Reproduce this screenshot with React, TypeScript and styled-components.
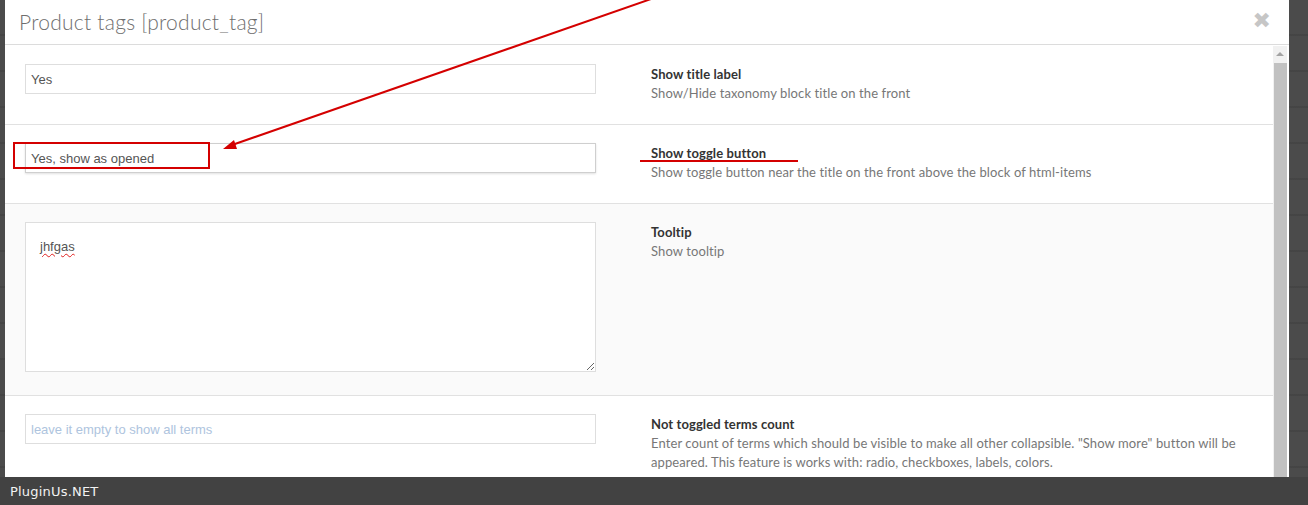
import React from 'react';
import styled, { createGlobalStyle } from 'styled-components';

const GlobalStyle = createGlobalStyle`
  html, body {
    margin: 0;
    padding: 0;
    background: #474747;
    overflow: hidden;
  }
`;

const Page = styled.div`
  position: relative;
  width: 1308px;
  height: 505px;
  display: flex;
  flex-direction: column;
  background: repeating-linear-gradient(
    to bottom,
    #4b4b4b 0px,
    #4b4b4b 34px,
    #3e3e3e 35px,
    #4b4b4b 36px
  );
`;

const Stage = styled.div`
  flex: 1;
  min-height: 0;
  overflow: hidden;
  padding-left: 5px;
`;

const Modal = styled.div`
  width: 1284px;
  height: 100%;
  background: #fff;
  display: flex;
  flex-direction: column;
`;

const Header = styled.div`
  height: 45px;
  flex-shrink: 0;
  display: flex;
  align-items: center;
  justify-content: space-between;
  padding: 0 18px 0 14px;
  border-bottom: 1px solid #dcdcdc;
  box-sizing: border-box;
`;

const Title = styled.h1`
  margin: 0 0 1px;
  font-family: Lato, 'Open Sans', sans-serif;
  font-weight: 300;
  font-size: 21px;
  color: #6e6e6e;
  letter-spacing: 0.25px;
`;

const Close = styled.span`
  font-family: 'DejaVu Sans', sans-serif;
  font-weight: bold;
  font-size: 22px;
  line-height: 1;
  color: #c6c6c6;
  margin-top: -3px;
`;

const Body = styled.div`
  flex: 1;
  min-height: 0;
  display: flex;
  padding-top: 1px;
`;

const Content = styled.div`
  flex: 1;
  min-width: 0;
  overflow: hidden;
`;

const Row = styled.div<{ $shade?: boolean }>`
  display: grid;
  grid-template-columns: 571px 602px;
  column-gap: 55px;
  padding: 18px 20px 21px;
  background: ${(p) => (p.$shade ? '#fafafa' : '#fff')};
  border-bottom: 1px solid #e1e1e1;
`;

const Field = styled.input<{ $focused?: boolean }>`
  width: 100%;
  height: 30px;
  box-sizing: border-box;
  border: 1px solid ${(p) => (p.$focused ? '#cfcfcf' : '#dedede')};
  box-shadow: ${(p) => (p.$focused ? '0 1px 2px rgba(0,0,0,0.12)' : 'none')};
  padding: 0 5px;
  font-family: 'Liberation Sans', Arial, sans-serif;
  font-size: 13px;
  color: #555;
  background: #fff;
  outline: none;

  &::placeholder {
    color: #aec4de;
  }
`;

const Area = styled.textarea`
  width: 100%;
  height: 150px;
  margin-bottom: 2px;
  box-sizing: border-box;
  border: 1px solid #dedede;
  padding: 16px 14px;
  font-family: 'Liberation Sans', Arial, sans-serif;
  font-size: 13px;
  color: #555;
  background: #fff;
  outline: none;
  text-decoration: underline wavy #e02020;
  text-decoration-thickness: 1px;
  text-underline-offset: 2px;
`;

const Info = styled.div`
  padding-top: 1px;
  font-family: Lato, 'Open Sans', sans-serif;
  font-size: 13px;
  line-height: 19px;
  letter-spacing: 0.1px;
`;

const Label = styled.div`
  font-weight: bold;
  color: #333;
`;

const Desc = styled.div`
  color: #777;
`;

const Scrollbar = styled.div`
  width: 14px;
  margin-right: 2px;
  flex-shrink: 0;
  background: #f1f1f1;
  display: flex;
  flex-direction: column;
  align-items: center;
`;

const ScrollArrow = styled.div`
  width: 0;
  height: 0;
  margin: 6px 0 7px;
  border-left: 4px solid transparent;
  border-right: 4px solid transparent;
  border-bottom: 4px solid #a3a3a3;
`;

const Thumb = styled.div`
  width: 13px;
  flex: 1;
  background: #c1c1c1;
`;

const Footer = styled.div`
  height: 28px;
  flex-shrink: 0;
  background: #424242;
  display: flex;
  align-items: center;
  padding-left: 10px;
  font-family: 'DejaVu Sans', sans-serif;
  font-size: 13px;
  color: #f2f2f2;
  letter-spacing: 0.2px;
`;

const Markup = styled.svg`
  position: absolute;
  left: 0;
  top: 0;
  pointer-events: none;
`;

const rows = [
  {
    value: 'Yes',
    label: 'Show title label',
    desc: 'Show/Hide taxonomy block title on the front',
  },
  {
    value: 'Yes, show as opened',
    focused: true,
    label: 'Show toggle button',
    desc: 'Show toggle button near the title on the front above the block of html-items',
  },
];

export default function App() {
  return (
    <>
      <GlobalStyle />
      <Page>
        <Stage>
          <Modal>
            <Header>
              <Title>Product tags [product_tag]</Title>
              <Close>✖</Close>
            </Header>
            <Body>
              <Content>
                {rows.map((r) => (
                  <Row key={r.label}>
                    <Field readOnly value={r.value} $focused={r.focused} />
                    <Info>
                      <Label>{r.label}</Label>
                      <Desc>{r.desc}</Desc>
                    </Info>
                  </Row>
                ))}
                <Row $shade>
                  <Area readOnly value="jhfgas" />
                  <Info>
                    <Label>Tooltip</Label>
                    <Desc>Show tooltip</Desc>
                  </Info>
                </Row>
                <Row>
                  <Field readOnly value="" placeholder="leave it empty to show all terms" />
                  <Info>
                    <Label>Not toggled terms count</Label>
                    <Desc>
                      Enter count of terms which should be visible to make all other collapsible. "Show more"
                      button will be appeared. This feature is works with: radio, checkboxes, labels, colors.
                    </Desc>
                  </Info>
                </Row>
              </Content>
              <Scrollbar>
                <ScrollArrow />
                <Thumb />
              </Scrollbar>
            </Body>
          </Modal>
        </Stage>
        <Footer>PluginUs.NET</Footer>
        <Markup width="1308" height="505" viewBox="0 0 1308 505">
          <rect x="14" y="143" width="195" height="25" fill="none" stroke="#d40000" strokeWidth="2" />
          <line x1="651" y1="-1" x2="232" y2="145" stroke="#d40000" strokeWidth="2" />
          <polygon points="223,149 234,140 237,149" fill="#d40000" />
          <line x1="640" y1="161" x2="798" y2="161" stroke="#d40000" strokeWidth="2" />
        </Markup>
      </Page>
    </>
  );
}
